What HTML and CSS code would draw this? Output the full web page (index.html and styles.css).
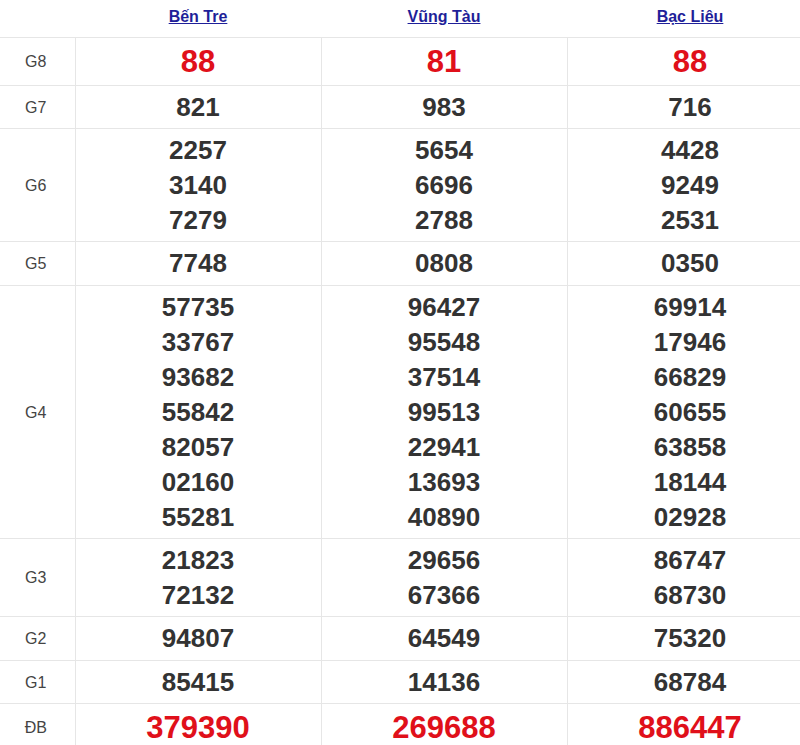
FILE: index.html
```html
<!DOCTYPE html>
<html lang="vi">
<head>
<meta charset="utf-8">
<title>Kết quả xổ số</title>
<link rel="stylesheet" href="styles.css">
</head>
<body>
<div class="wrap">
<table class="kq">
  <colgroup>
    <col class="c-label"><col class="c-prov"><col class="c-prov"><col class="c-prov">
  </colgroup>
  <thead>
    <tr class="head">
      <th></th>
      <th><a href="#">Bến Tre</a></th>
      <th><a href="#">Vũng Tàu</a></th>
      <th><a href="#">Bạc Liêu</a></th>
    </tr>
  </thead>
  <tbody>
    <tr class="big">
      <td class="lbl">G8</td>
      <td class="red">88</td><td class="red">81</td><td class="red">88</td>
    </tr>
    <tr>
      <td class="lbl">G7</td>
      <td>821</td><td>983</td><td>716</td>
    </tr>
    <tr>
      <td class="lbl">G6</td>
      <td>2257<br>3140<br>7279</td>
      <td>5654<br>6696<br>2788</td>
      <td>4428<br>9249<br>2531</td>
    </tr>
    <tr class="roomy">
      <td class="lbl">G5</td>
      <td>7748</td><td>0808</td><td>0350</td>
    </tr>
    <tr>
      <td class="lbl">G4</td>
      <td>57735<br>33767<br>93682<br>55842<br>82057<br>02160<br>55281</td>
      <td>96427<br>95548<br>37514<br>99513<br>22941<br>13693<br>40890</td>
      <td>69914<br>17946<br>66829<br>60655<br>63858<br>18144<br>02928</td>
    </tr>
    <tr>
      <td class="lbl">G3</td>
      <td>21823<br>72132</td>
      <td>29656<br>67366</td>
      <td>86747<br>68730</td>
    </tr>
    <tr class="roomy">
      <td class="lbl">G2</td>
      <td>94807</td><td>64549</td><td>75320</td>
    </tr>
    <tr>
      <td class="lbl">G1</td>
      <td>85415</td><td>14136</td><td>68784</td>
    </tr>
    <tr class="big">
      <td class="lbl">ĐB</td>
      <td class="red">379390</td><td class="red">269688</td><td class="red">886447</td>
    </tr>
  </tbody>
</table>
</div>
</body>
</html>
```
FILE: styles.css
```css
html, body {
  margin: 0;
  padding: 0;
  background: #fff;
}
body {
  font-family: "Liberation Sans", Arial, sans-serif;
  overflow: hidden;
  width: 800px;
  height: 745px;
}
.wrap {
  width: 800px;
  overflow: hidden;
}
.kq {
  border-collapse: collapse;
  table-layout: fixed;
  width: 813px;
}
.c-label { width: 75px; }
.c-prov { width: 246px; }

.kq th,
.kq td {
  padding: 3.5px 0;
  text-align: center;
  vertical-align: middle;
}
.kq td {
  border: 1px solid #e6e6e6;
  font-size: 26px;
  font-weight: bold;
  line-height: 35px;
  color: #333;
}
.kq td:first-child {
  border-left: none;
}
.roomy td {
  padding: 4px 0;
}
.head th {
  height: 33px;
  padding: 0 0 4px;
  border-bottom: 1px solid #e6e6e6;
  font-size: 16px;
  font-weight: bold;
  line-height: 20px;
}
.head th a {
  color: #1f1f99;
  text-decoration: underline;
}
.kq td.lbl {
  font-size: 16px;
  font-weight: normal;
  color: #444;
  padding-right: 3px;
}
.big td {
  line-height: 40px;
}
.kq td.red {
  color: #e0101a;
  font-size: 31px;
}
```
